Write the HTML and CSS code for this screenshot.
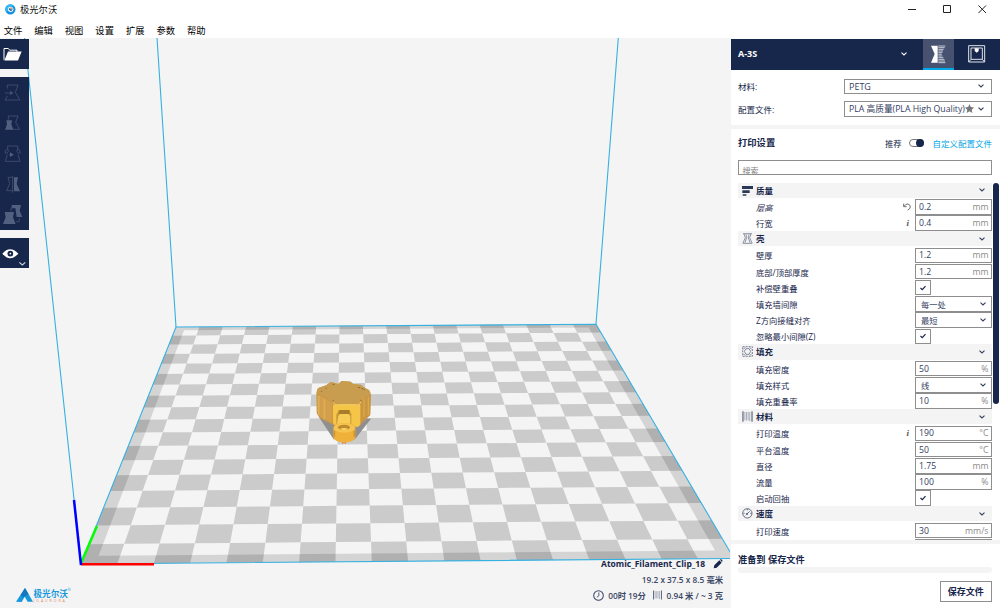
FILE: index.html
```html
<!DOCTYPE html>
<html lang="zh-CN">
<head>
<meta charset="utf-8">
<title>极光尔沃</title>
<link rel="stylesheet" href="styles.css">
</head>
<body>
<svg class="defs" width="0" height="0">
  <symbol id="chev" viewBox="0 0 8 6"><path d="M1.5 1.6 4 4 6.500 1.6" fill="none" stroke="currentColor" stroke-width="1.1"/></symbol>
  <symbol id="check" viewBox="0 0 8 8"><path d="M1.500 4 3.300 5.700 6.500 2.200" fill="none" stroke="currentColor" stroke-width="1.2"/></symbol>
  <symbol id="spool" viewBox="0 0 32 34"><path d="M2 1v32M30 1v32" stroke="currentColor" stroke-width="3"/><path d="M8 3v26M13 3v26M18 3v26M23 3v28" stroke="currentColor" stroke-width="2.4" opacity=".5"/></symbol>
</svg>
<header class="titlebar">
  <svg class="logo" viewBox="0 0 33 33"><circle cx="16" cy="16" r="15.5" fill="#1593e0"/><path d="M16 1A15 15 0 0 0 3 24L10 18A8 8 0 0 1 18 8L26 5A15 15 0 0 0 16 1Z" fill="#35b8f4"/><circle cx="17" cy="16" r="8" fill="#fff"/><path d="M11 15q6-7 12 0l-4 7q-6-1-8-7Z" fill="#1b6fc0"/><circle cx="19" cy="13" r="3.5" fill="#f0a070"/></svg>
  <span class="apptitle">极光尔沃</span>
  <svg class="winbtns" viewBox="0 0 110 20"><path d="M18 9.5h8M53.5 5.5h7v7h-7ZM88.5 5.5l7.500 7.500M96 5.500l-7.500 7.500" fill="none" stroke="#222" stroke-width="1"/></svg>
</header>
<nav class="menu"><span>文件</span><span>编辑</span><span>视图</span><span>设置</span><span>扩展</span><span>参数</span><span>帮助</span></nav>
<main class="main">
  <section class="view">
    <svg class="scene" viewBox="0 38 730 570">
      <path d="M81 564 734 558.500 596 324 176 327Z" fill="#f4f4f4"/>
      <path id="cells" fill="#cbcbcb"/>
      <path id="rim" fill="#000" fill-opacity=".13" fill-rule="evenodd"/>
      <g fill="none" stroke="#35b1e1" stroke-width="1.100"><path d="M24.500 38 81 564M157 38 176 327M618.300 38 596 324"/><path d="M81 564 176 327 596 324.300 734 558.500Z"/></g>
      <g fill="none" stroke-width="2.500"><path d="M81 563 97 526" stroke="#0f0"/><path d="M81 564.200H154" stroke="#f00"/><path d="M81 565 74 500" stroke="#00f"/></g>
      <g transform="translate(290 360) scale(.33333)">
        <path d="M86 170 131 238 195 238 243 176Z" fill="#8f8f8f"/>
        <path d="M79 97 84 84 108 76 122 66 145 72 155 63 182 65 190 72 213 74 222 82 238 91 243 104 241 165 211 194 203 201 135 198 89 174 80 160Z" fill="#c9954a"/>
        <path d="M80 97 84 85 110 76 122 66 145 71 155 63 182 65 189 72 213 75 220 82 235 89 242 100 211 125 206 134 138 134 126 124Z" fill="#c99d50"/>
        <path d="M82 103 127 127 127 188 90 171 82 160Z" fill="#d39f4b"/>
        <path d="M86 108V166M103 117V178" stroke="#dcae58" stroke-width="5"/>
        <path d="M213 126 241 105 240 165 213 180Z" fill="#ca963f"/>
        <path d="M222 118V172M235 110V165" stroke="#d9a94e" stroke-width="4"/>
        <path d="M129 134Q169 130 211 134V194L203 201 135 196 129 189Z" fill="#f5c548"/>
        <path d="M129 128 138 135H207L213 125" fill="none" stroke="#f5cd65" stroke-width="3"/>
        <path d="M146 150H179L184 163V193H139V165Z" fill="#c8973a"/>
        <path d="M145 168 150 162H175L181 168V194H141Z" fill="#f9cd55"/><path d="M149 150H178V162H146Z" fill="#a97c2b"/>
        <path d="M130 204Q130 190 162 189Q195 190 196 204V232Q194 246 163 248Q133 246 130 232Z" fill="#efb13a"/>
        <ellipse cx="163" cy="204" rx="32" ry="14" fill="#f5c550"/><ellipse cx="162" cy="202" rx="18" ry="8" fill="#c18a2e"/>
        <path d="M150 207Q162 201 175 207Q162 213 150 207" fill="#ffd966"/>
        <path d="M133 230V212M193 230V212" stroke="#d1932f" stroke-width="5"/>
        <path d="M156 249h4M164 249h4" stroke="#e57835" stroke-width="4"/>
        <path d="M93 94h3M107 85h3M128 73h5M205 83h6M215 86h5M128 122h3M211 121h3M221 89h3" stroke="#84622d" stroke-width="3"/>
      </g>
      <g transform="translate(0 480) scale(.33333)">
        <path d="M48 365 75 324 99 365H83L74 350 65 366Z" fill="#1598dc"/><path d="M62 345 75 324 86 343 70 352Z" fill="#1478bd"/>
      </g>
      <text x="33.500" y="596.800" class="brand">极光尔沃</text><text x="67.500" y="591" class="brandr">®</text>
      <text x="33.500" y="601.800" class="brandsub">JGAURORA</text>
    </svg>
    <div class="tools">
      <div class="tbtn open"><svg viewBox="0 116 87 91"><path d="M12 178V144H25L29 149H51V154" fill="none" stroke="#fff" stroke-width="3"/><path d="M24 153H65L54 180H13Z" fill="#fff"/></svg></div>
      <div class="group">
        <div class="tbtn"><svg viewBox="0 0 87 92"><path d="M22 35V24H54L46 46 60 69H15L22 57M15 48H38" fill="none" stroke="#445174" stroke-width="2.500"/><path d="M30 41 40 48 30 55Z" fill="#445174"/></svg></div>
        <div class="tbtn"><svg viewBox="0 0 87 92"><path d="M25 38V27H54L47 46 59 67H39" fill="none" stroke="#445174" stroke-width="2.500"/><path d="M19 40H36L34 52 40 68H15L21 52Z" fill="#526080"/></svg></div>
        <div class="tbtn"><svg viewBox="0 0 87 92"><path d="M23 24H53V32M23 24V32M22 50 16 70H60L54 50M23 32Q14 35 15 45Q22 49 25 40ZM53 32Q62 35 61 45Q54 49 51 40ZM27 50H40" fill="none" stroke="#445174" stroke-width="2.500"/><path d="M30 43 41 50 30 57Z" fill="#526080"/></svg></div>
        <div class="tbtn"><svg viewBox="0 0 87 92"><path d="M36 25H24L29 44 20 65H36M38 20V71" fill="none" stroke="#445174" stroke-width="2.500"/><path d="M42 25H54L50 45 60 67H42Z" fill="#526080"/></svg></div>
        <div class="tbtn"><svg viewBox="0 0 87 92"><path d="M35 18H63L59 35 67 54H50L46 27H35ZM14 39H42L39 55 47 75H9L17 55Z" fill="#526080"/><path d="M33 37V27H42M48 68H58V58" fill="none" stroke="#445174" stroke-width="2.500"/></svg></div>
      </div>
      <div class="tbtn eye"><svg viewBox="0 323 87 92"><path d="M7 370Q30 344 55 370Q30 397 7 370Z" fill="#fff"/><circle cx="31" cy="370" r="8.500" fill="#17264b"/><circle cx="31" cy="370" r="2.500" fill="#fff"/><path d="M58 396 67 404 76 396" fill="none" stroke="#ccd2df" stroke-width="3.500"/></svg></div>
    </div>
    <div class="info">
      <div class="iname"><span>Atomic_Filament_Clip_18</span><svg viewBox="0 0 28 30"><path d="M1 28 3 19 18 4 25 11 10 26ZM20 2 23 0 28 5 26 9Z" fill="#17264b"/></svg></div>
      <div class="isize">19.2 x 37.5 x 8.5 毫米</div>
      <div class="istat"><svg class="clock" viewBox="0 0 32 32"><circle cx="16" cy="16" r="14" fill="none" stroke="#3c4867" stroke-width="3"/><path d="M17 7V17L11 21" fill="none" stroke="#3c4867" stroke-width="2.500"/></svg><span>00时 19分</span><svg class="ispool"><use href="#spool"/></svg><span>0.94 米 / ~ 3 克</span></div>
    </div>
  </section>
  <aside class="panel">
    <div class="phead"><b>A-3S</b><svg class="chev"><use href="#chev"/></svg>
      <div class="tab on"><svg viewBox="0 0 93 93"><path d="M24 20H44V71H24L35 45Z" fill="#fff"/><path d="M46 21H67M46 26H65M46 31H62M46 36H60M46 41H58M46 46H56M46 51H58M46 56H61M46 61H64M46 66H66M46 71H67" stroke="#c5cad6" stroke-width="3"/></svg></div>
      <div class="tab"><svg viewBox="0 0 117 93"><path d="M44 20H92V69H44ZM51 27H85V61H51ZM44 69 51 61M92 69 85 61" fill="none" stroke="#dfe2ea" stroke-width="3"/><path d="M62 28H74V36L68 41 62 36Z" fill="#fff"/></svg></div>
    </div>
    <div class="selects">
      <div class="srow"><label>材料:</label><div class="sel"><span>PETG</span><svg class="chev"><use href="#chev"/></svg></div></div>
      <div class="srow"><label>配置文件:</label><div class="sel prof"><span>PLA 高质量(PLA High Quality)</span><svg class="star" viewBox="0 0 24 24"><path d="M12 0 15.500 8 24 9 18 15 19.500 24 12 19.500 4.500 24 6 15 0 9 8.500 8Z" fill="#777"/></svg><svg class="chev"><use href="#chev"/></svg></div></div>
    </div>
    <div class="settings">
      <div class="shead"><b>打印设置</b><span class="rec">推荐</span><i class="toggle"></i><span class="custom">自定义配置文件</span></div>
      <div class="search">搜索</div>
      <div class="listwrap">
        <div class="list">
          <div class="cat"><svg viewBox="0 0 33 33"><path d="M0 3H33V12H0ZM1 16H23V24H1ZM2 28H13V32H2Z" fill="#2b3857"/></svg><b>质量</b><svg class="chev"><use href="#chev"/></svg></div>
          <div class="row"><label class="it">层高</label><svg class="undo" viewBox="0 0 24 24"><path d="M3 10Q8 2 15 3Q22 5 22 12Q21 19 14 21M2 2V11H11" fill="none" stroke="#666" stroke-width="2.800"/></svg><div class="box">0.2<em>mm</em></div></div>
          <div class="row"><label>行宽</label><i class="inf">i</i><div class="box">0.4<em>mm</em></div></div>
          <div class="cat"><svg viewBox="0 0 33 33"><path d="M3 2H30M2 31H31M6 3 10 14 3 30M27 3 23 14 30 30M12 4 14 14 9 29M21 4 19 14 24 29" fill="none" stroke="#5a647d" stroke-width="2"/></svg><b>壳</b><svg class="chev"><use href="#chev"/></svg></div>
          <div class="row"><label>壁厚</label><div class="box">1.2<em>mm</em></div></div>
          <div class="row"><label>底部/顶部厚度</label><div class="box">1.2<em>mm</em></div></div>
          <div class="row"><label>补偿壁重叠</label><div class="cb"><svg><use href="#check"/></svg></div></div>
          <div class="row"><label>填充墙间隙</label><div class="box dd">每一处<svg class="chev"><use href="#chev"/></svg></div></div>
          <div class="row"><label>Z方向接缝对齐</label><div class="box dd">最短<svg class="chev"><use href="#chev"/></svg></div></div>
          <div class="row"><label>忽略最小间隙(Z)</label><div class="cb"><svg><use href="#check"/></svg></div></div>
          <div class="cat"><svg viewBox="0 0 33 33"><path d="M2 2H31V31H2Z" fill="none" stroke="#4a5570" stroke-width="2.200" stroke-dasharray="6 3"/><path d="M10 4 4 10M23 4 29 10M4 23 10 29M29 23 23 29M12 8H21L26 16 21 25H12L7 16Z" fill="none" stroke="#4a5570" stroke-width="2"/></svg><b>填充</b><svg class="chev"><use href="#chev"/></svg></div>
          <div class="row"><label>填充密度</label><div class="box">50<em>%</em></div></div>
          <div class="row"><label>填充样式</label><div class="box dd">线<svg class="chev"><use href="#chev"/></svg></div></div>
          <div class="row"><label>填充重叠率</label><div class="box">10<em>%</em></div></div>
          <div class="cat"><svg><use href="#spool"/></svg><b>材料</b><svg class="chev"><use href="#chev"/></svg></div>
          <div class="row"><label>打印温度</label><i class="inf">i</i><div class="box">190<em>°C</em></div></div>
          <div class="row"><label>平台温度</label><div class="box">50<em>°C</em></div></div>
          <div class="row"><label>直径</label><div class="box">1.75<em>mm</em></div></div>
          <div class="row"><label>流量</label><div class="box">100<em>%</em></div></div>
          <div class="row"><label>启动回抽</label><div class="cb"><svg><use href="#check"/></svg></div></div>
          <div class="cat"><svg viewBox="0 0 33 33"><circle cx="16" cy="16" r="14" fill="none" stroke="#4a5570" stroke-width="2.500"/><path d="M15 18 23 10M16 3V7M4 16H8M25 16H29M8 25 10 23" stroke="#4a5570" stroke-width="2.500"/><circle cx="15" cy="18" r="3" fill="#4a5570"/></svg><b>速度</b><svg class="chev"><use href="#chev"/></svg></div>
          <div class="row"><label>打印速度</label><div class="box">30<em>mm/s</em></div></div>
          <div class="row"><label></label><div class="box"></div></div>
        </div>
        <div class="scroll"></div>
      </div>
    </div>
    <div class="foot"><b>准备到 保存文件</b><div class="bar"></div><button class="save">保存文件</button></div>
  </aside>
</main>
<script src="plate.js"></script>
</body>
</html>
```
FILE: styles.css
```css
* { box-sizing: border-box; }
body { margin: 0; width: 1000px; height: 608px; overflow: hidden; display: flex; flex-direction: column; background: #fff; color: #17264b; font: 8.5px "Open Sans", "Noto Sans CJK SC", sans-serif; }
svg { display: block; flex: none; }
.defs { position: absolute; }
.titlebar { height: 20px; display: flex; align-items: center; padding-left: 5px; }
.logo { width: 11px; height: 11px; margin-top: -1px; }
.apptitle { margin-left: 4px; font-size: 9.3px; color: #111; line-height: 19px; height: 20px; flex: 1; }
.winbtns { width: 110px; height: 20px; }
.menu { height: 18px; display: flex; gap: 11.750px; padding-left: 3.700px; font-size: 9.3px; line-height: 21px; color: #000; }
.menu span { width: 18.800px; white-space: nowrap; }
.main { height: 570px; display: flex; }
.view { width: 730px; position: relative; background: #f4f4f4; overflow: hidden; }
.scene { position: absolute; left: 0; top: 0; width: 730px; height: 570px; }
.brand { font: 700 8.600px "Noto Sans CJK SC", sans-serif; fill: #1598dc; }
.brandr { font: 4px "Open Sans", sans-serif; fill: #1598dc; }
.brandsub { font: 3.600px "Open Sans", sans-serif; letter-spacing: 1.900px; fill: #e08468; }
.tools { position: relative; width: 28.500px; padding-top: .5px; display: flex; flex-direction: column; gap: 7.500px; }
.tbtn svg { width: 29px; height: 30.700px; }
.open, .group, .eye { background: #17264b; }
.open, .eye { height: 30.500px; overflow: hidden; }
.group { height: 153.800px; }
.info { position: absolute; right: 7px; bottom: 0; height: 53px; display: flex; flex-direction: column; align-items: flex-end; font-weight: 600; white-space: nowrap; color: #3c4867; }
.iname { display: flex; gap: 8px; height: 17px; align-items: center; color: #17264b; font-weight: 700; font-size: 8.500px; }
.iname svg { width: 10px; height: 10px; }
.isize { height: 15.500px; line-height: 16px; font-size: 8.300px; }
.istat { display: flex; align-items: center; height: 15px; font-size: 8.300px; }
.clock { width: 11px; height: 11px; margin-right: 4px; }
.ispool { width: 9px; height: 10px; margin: 0 4px 0 7.500px; }
.panel { width: 270px; background: #fff; border-left: 1px solid #f4f4f4; }
.chev { width: 8px; height: 6px; color: #34405f; }
.phead { height: 31px; margin-top: .5px; background: #17264b; color: #fff; display: flex; align-items: center; padding-left: 7px; font-size: 9px; }
.phead b { flex: 1; margin-top: -2px; }
.phead .chev { margin-right: 15px; color: #fff; }
.tab { height: 31px; width: 46px; }
.tab svg { height: 31px; width: 39px; }
.tab.on { width: 31px; background: linear-gradient(#465270 29px, #00a8e8 29px); }
.tab.on svg { width: 31px; }
.selects { height: 55.500px; padding: 9px 8px 0 7px; display: flex; flex-direction: column; gap: 7px; }
.srow { display: flex; height: 15.500px; align-items: center; }
.srow label { width: 106px; }
.sel { width: 148px; height: 15.500px; border: 1px solid #8e8e8e; display: flex; align-items: center; padding: 0 6px 0 4px; white-space: nowrap; font-size: 9px; color: #34405f; }
.sel span { flex: 1; }
.sel .star { width: 9px; height: 9px; margin-right: 3px; }
.sel.prof { font-size: 8.700px; }
.settings { border-top: 4px solid #f4f4f4; height: 419px; border-bottom: 4px solid #f4f4f4; padding-left: 7px; overflow: hidden; }
.shead { display: flex; align-items: center; height: 30.500px; padding: 0 8px 2px 0; white-space: nowrap; }
.shead b { flex: 1; font-size: 9.300px; margin-top: -2px; }
.rec { font-size: 8.300px; }
.toggle { width: 15px; height: 8px; border: 1px solid #777; border-radius: 4px; margin: 0 8px 0 8px; display: flex; justify-content: flex-end; align-items: center; }
.toggle::after { content: ""; flex: none; width: 8px; height: 8px; margin-right: -1px; border-radius: 50%; background: #17264b; }
.custom { color: #08a6e4; }
.search { width: 254px; height: 15.500px; border: 1px solid #8e8e8e; padding-left: 3.500px; line-height: 19px; font-size: 8px; color: #808080; overflow: hidden; }
.listwrap { display: flex; gap: 1px; padding-top: 7.500px; height: 364px; }
.list { width: 254px; }
.cat { height: 16.190px; border-bottom: 1px solid #fff; background: #f4f4f4; display: flex; align-items: center; padding: 0 6.500px 0 4px; }
.cat svg:first-child { width: 11px; height: 11px; color: #34405f; }
.cat b { margin-left: 3px; flex: 1; margin-top: -1px; }
.row { height: 16.190px; display: flex; align-items: center; padding-left: 18px; }
.row label { flex: 1; font-size: 8.300px; white-space: nowrap; }
.it { font-style: italic; }
.box { width: 77px; height: 15.500px; border: 1px solid #8e8e8e; display: flex; align-items: center; justify-content: space-between; padding: 0 2.500px 0 3px; color: #34405f; font-size: 8.700px; }
.box em { font-style: normal; color: #8a8a8a; }
.dd { font-size: 8.300px; padding: 0 4px 0 5px; }
.cb { width: 15.500px; height: 15.500px; border: 1px solid #8e8e8e; margin-right: 61.500px; display: flex; align-items: center; justify-content: center; }
.cb svg { width: 8px; height: 8px; }
.undo { width: 8px; height: 8px; margin-right: 4px; }
.inf { font: italic bold 9px "Liberation Serif", serif; color: #555; margin-right: 6px; }
.scroll { width: 6px; height: 221px; border-radius: 3px; background: #17264b; }
.foot { padding: 8px 8px 0 7px; display: flex; flex-direction: column; }
.foot b { font-size: 9.200px; line-height: 15px; white-space: nowrap; }
.bar { height: 6px; border-radius: 3px; background: #f4f4f4; width: 254px; }
.save { align-self: flex-end; margin-top: 7.500px; width: 52.500px; height: 21px; padding: 0; border: 1px solid #8e8e8e; background: #fff; color: #17264b; font: bold 9px "Open Sans", "Noto Sans CJK SC", sans-serif; }
```
FILE: plate.js
```js
// Perspective mapping of the unit square onto the build plate corners.
const [x0, y0, x1, y1, x2, y2, x3, y3] = [81, 564, 734, 558.5, 596, 324, 176, 327];
const sx = x0 - x1 + x2 - x3, sy = y0 - y1 + y2 - y3;
const dx1 = x1 - x2, dx2 = x3 - x2, dy1 = y1 - y2, dy2 = y3 - y2;
const det = dx1 * dy2 - dx2 * dy1;
const g = (sx * dy2 - dx2 * sy) / det, h = (dx1 * sy - sx * dy1) / det;
const a = x1 - x0 + g * x1, b = x3 - x0 + h * x3;
const d = y1 - y0 + g * y1, e = y3 - y0 + h * y3;
const point = (u, v) => {
  const w = g * u + h * v + 1;
  return ((a * u + b * v + x0) / w).toFixed(2) + " " + ((d * u + e * v + y0) / w).toFixed(2);
};
const quad = (u, v, s, t) => `M${point(u, v)}L${point(s, v)}L${point(s, t)}L${point(u, t)}Z`;
const N = 18;
let cells = "";
for (let i = 0; i < N; i++)
  for (let j = 0; j < N; j++)
    if ((i + j) % 2 === 0) cells += quad(i / N, j / N, (i + 1) / N, (j + 1) / N);
document.getElementById("cells").setAttribute("d", cells);
const m = 0.4 / N;
document.getElementById("rim").setAttribute("d", quad(0, 0, 1, 1) + quad(m, m, 1 - m, 1 - m));
```
